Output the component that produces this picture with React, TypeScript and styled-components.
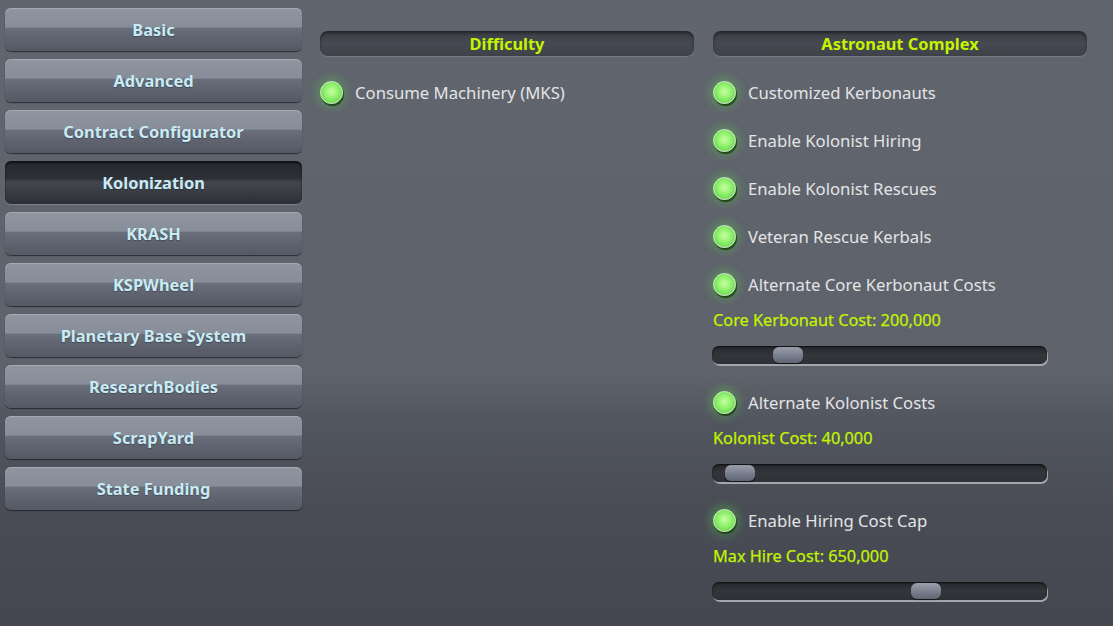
import React from 'react';
import styled, {createGlobalStyle, css} from 'styled-components';

const GlobalStyle = createGlobalStyle`
  html, body {
    margin: 0;
    padding: 0;
    width: 1113px;
    height: 626px;
    overflow: hidden;
  }
  body {
    font-family: "Noto Sans", "Open Sans", sans-serif;
    background: linear-gradient(180deg, #61656e 0%, #5e626b 60%, #52565f 67%, #4a4d56 80%, #444750 100%);
  }
`

const tabs = [
  'Basic',
  'Advanced',
  'Contract Configurator',
  'Kolonization',
  'KRASH',
  'KSPWheel',
  'Planetary Base System',
  'ResearchBodies',
  'ScrapYard',
  'State Funding',
]

type Setting =
  | {kind: 'toggle', label: string}
  | {kind: 'slider', label: string, thumb: number}

const astronautSettings: Setting[] = [
  {kind: 'toggle', label: 'Customized Kerbonauts'},
  {kind: 'toggle', label: 'Enable Kolonist Hiring'},
  {kind: 'toggle', label: 'Enable Kolonist Rescues'},
  {kind: 'toggle', label: 'Veteran Rescue Kerbals'},
  {kind: 'toggle', label: 'Alternate Core Kerbonaut Costs'},
  {kind: 'slider', label: 'Core Kerbonaut Cost: 200,000', thumb: 61},
  {kind: 'toggle', label: 'Alternate Kolonist Costs'},
  {kind: 'slider', label: 'Kolonist Cost: 40,000', thumb: 13},
  {kind: 'toggle', label: 'Enable Hiring Cost Cap'},
  {kind: 'slider', label: 'Max Hire Cost: 650,000', thumb: 199},
]

const Toggle: React.FC<{label: string}> = ({label}) => (
  <ToggleRow>
    <Lamp/>
    <ToggleLabel>{label}</ToggleLabel>
  </ToggleRow>
)

const Slider: React.FC<{label: string, thumb: number}> = ({label, thumb}) => (
  <>
    <ValueLabel>{label}</ValueLabel>
    <SliderRow>
      <Track>
        <Thumb style={{left: thumb}}/>
      </Track>
    </SliderRow>
  </>
)

export default function App() {
  return (
    <Page>
      <GlobalStyle/>
      <Sidebar>
        {tabs.map(tab =>
          <TabButton key={tab} active={tab === 'Kolonization'}>{tab}</TabButton>
        )}
      </Sidebar>
      <Column>
        <SectionHeader>Difficulty</SectionHeader>
        <Toggle label="Consume Machinery (MKS)"/>
      </Column>
      <Column>
        <SectionHeader>Astronaut Complex</SectionHeader>
        {astronautSettings.map(s =>
          s.kind === 'toggle'
            ? <Toggle key={s.label} label={s.label}/>
            : <Slider key={s.label} label={s.label} thumb={s.thumb}/>
        )}
      </Column>
    </Page>
  );
}

const Page = styled.div`
  display: flex;
  align-items: flex-start;
  padding: 8px 0 0 5px;
  gap: 18px;
  height: 626px;
  box-sizing: border-box;
`
const Sidebar = styled.div`
  display: flex;
  flex-direction: column;
  gap: 8px;
  width: 297px;
`
const idleButton = css`
  background: linear-gradient(180deg,
    #8f94a1 0%, #888d9a 45%, #6a6f7c 46%, #5f6470 70%, #545965 100%);
  box-shadow: inset 0 1px 0 #a4a9b4, 0 1px 1px rgba(20, 22, 28, 0.7);
`
const activeButton = css`
  background: linear-gradient(180deg,
    #25282e 0%, #2c2f35 40%, #43464d 50%, #3a3d44 70%, #2c2f35 100%);
  box-shadow: inset 0 2px 2px rgba(0, 0, 0, 0.6), 0 1px 0 #7c808a;
`
const TabButton = styled.div<{active?: boolean}>`
  height: 43px;
  border-radius: 6px;
  display: flex;
  align-items: center;
  justify-content: center;
  font-weight: 700;
  font-size: 16.4px;
  color: #c9ebf4;
  text-shadow: 0 1px 1px rgba(30, 35, 45, 0.4);
  ${({active}) => active ? activeButton : idleButton}
`
const Column = styled.div`
  display: flex;
  flex-direction: column;
  width: 374px;
  padding-top: 23px;
  &:last-child {
    margin-left: 1px;
  }
`
const SectionHeader = styled.div`
  height: 25px;
  border-radius: 8px;
  margin-bottom: 12px;
  display: flex;
  align-items: center;
  justify-content: center;
  font-weight: 700;
  font-size: 16.4px;
  color: #c2f400;
  background: linear-gradient(180deg, #3b3e45 0%, #464951 50%, #3f4249 100%);
  box-shadow: inset 0 2px 3px rgba(0, 0, 0, 0.45), 0 1px 1px #7a7e87;
`
const ToggleRow = styled.div`
  height: 48px;
  display: flex;
  align-items: center;
  gap: 12px;
`
const Lamp = styled.div`
  width: 21px;
  height: 21px;
  border-radius: 50%;
  border: 1.5px solid #d4f5c8;
  background: radial-gradient(circle at 50% 45%, #c8ffa2 0%, #8ef06c 45%, #55c43a 100%);
  box-shadow: 1px 2px 1px rgba(25, 70, 20, 0.9), 0 0 9px 4px rgba(90, 220, 70, 0.3);
  flex: none;
`
const ToggleLabel = styled.span`
  font-size: 16.7px;
  color: #e3e4e6;
`
const ValueLabel = styled.div`
  height: 24px;
  display: flex;
  align-items: center;
  font-size: 16.3px;
  color: #c2f400;
  -webkit-text-stroke: 0.25px #c2f400;
`
const SliderRow = styled.div`
  height: 46px;
  display: flex;
  align-items: center;
`
const Track = styled.div`
  position: relative;
  width: 335px;
  height: 18px;
  margin-left: -1px;
  border-radius: 7px;
  background: linear-gradient(180deg, #26282d 0%, #33353a 50%, #2f3136 100%);
  box-shadow: inset 0 1px 2px rgba(0, 0, 0, 0.7), 1px 2px 0 #a4a7ae;
`
const Thumb = styled.div`
  position: absolute;
  top: 1px;
  width: 30px;
  height: 16px;
  border-radius: 6px;
  background: linear-gradient(180deg, #9aa0ab 0%, #7e8491 45%, #5f6572 100%);
  box-shadow: 0 1px 1px rgba(0, 0, 0, 0.6);
`
